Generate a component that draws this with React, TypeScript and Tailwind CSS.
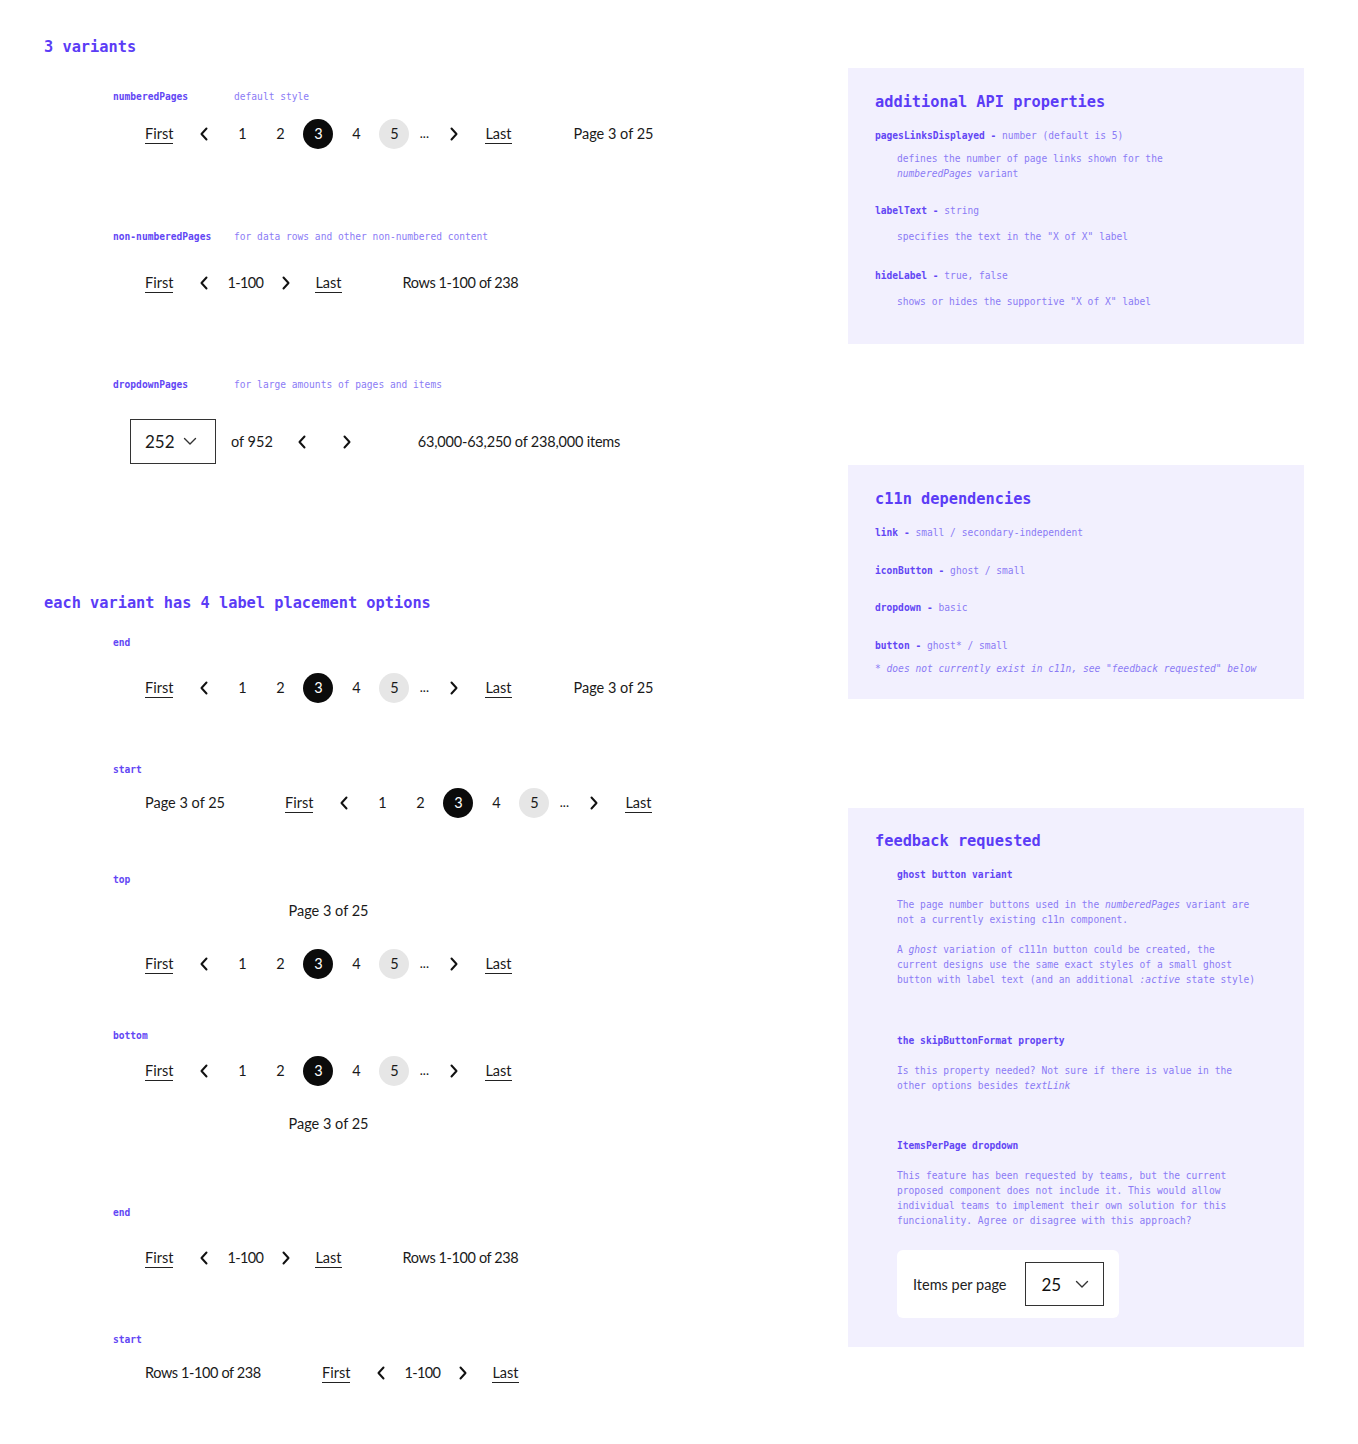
import type { ReactNode } from "react";

const mono = "font-['DejaVu_Sans_Mono','Liberation_Mono',monospace]";
const sans = "font-['Lato','Open_Sans',sans-serif]";

function ChevronLeft() {
  return (
    <svg width="10" height="14" viewBox="0 0 10 14" fill="none">
      <path d="M7.5 1.5 2.5 7l5 5.5" stroke="#111" strokeWidth="2" strokeLinecap="round" strokeLinejoin="round" />
    </svg>
  );
}

function ChevronRight() {
  return (
    <svg width="10" height="14" viewBox="0 0 10 14" fill="none">
      <path d="M2.5 1.5 7.5 7l-5 5.5" stroke="#111" strokeWidth="2" strokeLinecap="round" strokeLinejoin="round" />
    </svg>
  );
}

function ChevronDown() {
  return (
    <svg width="14" height="9" viewBox="0 0 14 9" fill="none">
      <path d="M1.5 1.5 7 7l5.5-5.5" stroke="#333" strokeWidth="1.4" strokeLinecap="round" strokeLinejoin="round" />
    </svg>
  );
}

function TextLink({ children }: { children: ReactNode }) {
  return (
    <span className="border-b border-[#222] pb-[1px] leading-[17px] text-[#1a1a1a]">{children}</span>
  );
}

function IconBox({ children }: { children: ReactNode }) {
  return <span className="flex h-[30px] w-[30px] items-center justify-center">{children}</span>;
}

function PageBtn({ n, state }: { n: number; state?: "active" | "hover" }) {
  const tone =
    state === "active"
      ? "bg-[#0b0b0b] text-white"
      : state === "hover"
        ? "bg-[#e6e6e6] text-[#1a1a1a]"
        : "text-[#1a1a1a]";
  return (
    <span className={`flex h-[30px] w-[30px] items-center justify-center rounded-full ${tone}`}>{n}</span>
  );
}

function Numbered() {
  return (
    <div className="flex h-[30px] items-center">
      <TextLink>First</TextLink>
      <div className="ml-4 flex items-center gap-2">
        <IconBox>
          <ChevronLeft />
        </IconBox>
        <PageBtn n={1} />
        <PageBtn n={2} />
        <PageBtn n={3} state="active" />
        <PageBtn n={4} />
        <PageBtn n={5} state="hover" />
        <span className="w-[14px] text-center text-[13px]">...</span>
        <IconBox>
          <ChevronRight />
        </IconBox>
      </div>
      <span className="ml-4">
        <TextLink>Last</TextLink>
      </span>
    </div>
  );
}

function NonNumbered() {
  return (
    <div className="flex h-[30px] items-center">
      <TextLink>First</TextLink>
      <div className="ml-4 flex items-center gap-2">
        <IconBox>
          <ChevronLeft />
        </IconBox>
        <span className="tracking-[-0.6px] text-[#1a1a1a]">1-100</span>
        <IconBox>
          <ChevronRight />
        </IconBox>
      </div>
      <span className="ml-[14px]">
        <TextLink>Last</TextLink>
      </span>
    </div>
  );
}

function Label({ children, tight }: { children: ReactNode; tight?: boolean }) {
  return (
    <span className={`text-[14.5px] text-[#1a1a1a] ${tight ? "tracking-[-0.4px]" : ""}`}>{children}</span>
  );
}

function Variant({ name, note, className }: { name: string; note?: string; className: string }) {
  return (
    <div className={`flex h-3 items-center text-[9.6px] leading-3 ${mono} ${className}`}>
      <span className="w-[121px] font-bold text-[#6246f4]">{name}</span>
      {note && <span className="text-[#8b7bf5]">{note}</span>}
    </div>
  );
}

function SideHeading({ children }: { children: ReactNode }) {
  return <h2 className="text-[15.3px] font-bold leading-5 text-[#5b3cf6]">{children}</h2>;
}

function Prop({ name, value, className }: { name: string; value: string; className: string }) {
  return (
    <p className={className}>
      <span className="font-bold text-[#6246f4]">{name} -</span> {value}
    </p>
  );
}

export default function App() {
  return (
    <div className={`flex min-h-[1444px] w-[1358px] bg-white ${sans} text-[14.5px] text-[#1a1a1a]`}>
      {/* left column: variants and label placements */}
      <div className="flex-1 pl-[44px] pt-[37px] pb-[56px]">
        <h1 className={`text-[15.3px] font-bold leading-5 text-[#5b3cf6] ${mono}`}>3 variants</h1>

        <Variant name="numberedPages" note="default style" className="ml-[69px] mt-[34px]" />
        <div className="ml-[101px] mt-4 flex items-center">
          <Numbered />
          <span className="ml-[62px]">
            <Label>Page 3 of 25</Label>
          </span>
        </div>

        <Variant
          name="non-numberedPages"
          note="for data rows and other non-numbered content"
          className="ml-[69px] mt-[82px]"
        />
        <div className="ml-[101px] mt-[25px] flex items-center">
          <NonNumbered />
          <span className="ml-[61px]">
            <Label tight>Rows 1-100 of 238</Label>
          </span>
        </div>

        <Variant name="dropdownPages" note="for large amounts of pages and items" className="ml-[69px] mt-[81px]" />
        <div className="ml-[86px] mt-7 flex h-[45px] items-center">
          <div className="flex h-[45px] w-[86px] items-center gap-2 border border-[#333] pl-[14px]">
            <span className="text-[17px]">252</span>
            <ChevronDown />
          </div>
          <span className="ml-[15px]">of 952</span>
          <div className="ml-[14px] flex items-center gap-[15px]">
            <IconBox>
              <ChevronLeft />
            </IconBox>
            <IconBox>
              <ChevronRight />
            </IconBox>
          </div>
          <span className="ml-[56px] tracking-[-0.2px]">63,000-63,250 of 238,000 items</span>
        </div>

        <h1 className={`mt-[129px] text-[15.3px] font-bold leading-5 text-[#5b3cf6] ${mono}`}>
          each variant has 4 label placement options
        </h1>

        <Variant name="end" className="ml-[69px] mt-6" />
        <div className="ml-[101px] mt-6 flex items-center">
          <Numbered />
          <span className="ml-[62px]">
            <Label>Page 3 of 25</Label>
          </span>
        </div>

        <Variant name="start" className="ml-[69px] mt-[61px]" />
        <div className="ml-[101px] mt-3 flex items-center">
          <span className="w-[140px]">
            <Label>Page 3 of 25</Label>
          </span>
          <Numbered />
        </div>

        <Variant name="top" className="ml-[69px] mt-[56px]" />
        <div className="ml-[101px] mt-[15px] w-[367px] text-center leading-5">
          <Label>Page 3 of 25</Label>
        </div>
        <div className="ml-[101px] mt-7">
          <Numbered />
        </div>

        <Variant name="bottom" className="ml-[69px] mt-[51px]" />
        <div className="ml-[101px] mt-[14px]">
          <Numbered />
        </div>
        <div className="ml-[101px] mt-7 w-[367px] text-center leading-5">
          <Label>Page 3 of 25</Label>
        </div>

        <Variant name="end" className="ml-[69px] mt-[73px]" />
        <div className="ml-[101px] mt-6 flex items-center">
          <NonNumbered />
          <span className="ml-[61px]">
            <Label tight>Rows 1-100 of 238</Label>
          </span>
        </div>

        <Variant name="start" className="ml-[69px] mt-[61px]" />
        <div className="ml-[101px] mt-3 flex items-center">
          <span className="w-[177px]">
            <Label tight>Rows 1-100 of 238</Label>
          </span>
          <NonNumbered />
        </div>
      </div>

      {/* right column: notes */}
      <div className={`mr-[54px] w-[456px] text-[9.6px] leading-[15px] text-[#8b7bf5] ${mono}`}>
        <section className="mt-[68px] bg-[#f2f0fe] pl-[27px] pr-4 pt-[24px] pb-[35px]">
          <SideHeading>additional API properties</SideHeading>
          <Prop name="pagesLinksDisplayed" value="number (default is 5)" className="mt-[16px]" />
          <p className="ml-[22px] mt-2">
            defines the number of page links shown for the
            <br />
            <em>numberedPages</em> variant
          </p>
          <Prop name="labelText" value="string" className="mt-[22px]" />
          <p className="ml-[22px] mt-[11px]">specifies the text in the "X of X" label</p>
          <Prop name="hideLabel" value="true, false" className="mt-6" />
          <p className="ml-[22px] mt-[11px]">shows or hides the supportive "X of X" label</p>
        </section>

        <section className="mt-[121px] bg-[#f2f0fe] pl-[27px] pr-4 pt-[24px] pb-[23px]">
          <SideHeading>c11n dependencies</SideHeading>
          <Prop name="link" value="small / secondary-independent" className="mt-[16px]" />
          <Prop name="iconButton" value="ghost / small" className="mt-[23px]" />
          <Prop name="dropdown" value="basic" className="mt-[22px]" />
          <Prop name="button" value="ghost* / small" className="mt-[23px]" />
          <p className="mt-2 italic">* does not currently exist in c11n, see "feedback requested" below</p>
        </section>

        <section className="mt-[109px] bg-[#f2f0fe] pl-[27px] pr-4 pt-[23px] pb-[29px]">
          <SideHeading>feedback requested</SideHeading>
          <div className="ml-[22px]">
            <h3 className="mt-[16px] font-bold text-[#6246f4]">ghost button variant</h3>
            <p className="mt-[15px]">
              The page number buttons used in the <em>numberedPages</em> variant are
              <br />
              not a currently existing c11n component.
            </p>
            <p className="mt-[15px]">
              A <em>ghost</em> variation of c111n button could be created, the
              <br />
              current designs use the same exact styles of a small ghost
              <br />
              button with label text (and an additional <em>:active</em> state style)
            </p>

            <h3 className="mt-[46px] font-bold text-[#6246f4]">the skipButtonFormat property</h3>
            <p className="mt-[15px]">
              Is this property needed? Not sure if there is value in the
              <br />
              other options besides <em>textLink</em>
            </p>

            <h3 className="mt-[45px] font-bold text-[#6246f4]">ItemsPerPage dropdown</h3>
            <p className="mt-[15px]">
              This feature has been requested by teams, but the current
              <br />
              proposed component does not include it. This would allow
              <br />
              individual teams to implement their own solution for this
              <br />
              funcionality. Agree or disagree with this approach?
            </p>

            <div className={`mt-[22px] flex h-[68px] w-[222px] items-center rounded-md bg-white pl-4 ${sans}`}>
              <span className="text-[14.5px] text-[#222]">Items per page</span>
              <div className="ml-[19px] flex h-[44px] w-[79px] items-center justify-between border border-[#333] pl-[15px] pr-[14px]">
                <span className="text-[17px] text-[#111]">25</span>
                <ChevronDown />
              </div>
            </div>
          </div>
        </section>
      </div>
    </div>
  );
}
